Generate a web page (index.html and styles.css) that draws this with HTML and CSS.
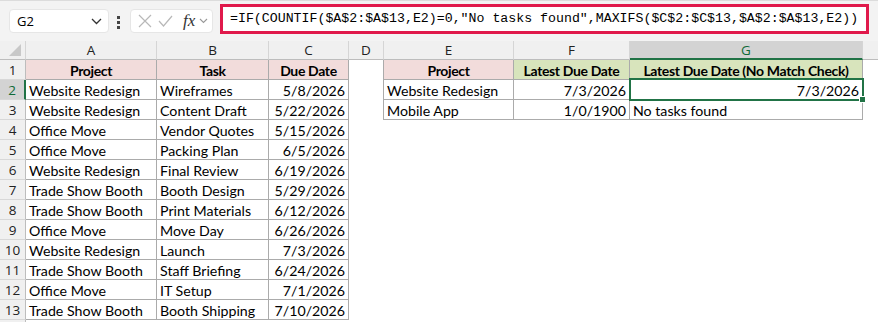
FILE: index.html
```html
<!DOCTYPE html>
<html lang="en">
<head>
  <meta charset="UTF-8">
  <title>Latest Due Date</title>
  <link rel="stylesheet" href="styles.css">
</head>
<body>

<!-- formula bar -->
<div class="toolbar">
  <div class="namebox">
    <span>G2</span>
    <svg width="11" height="7" viewBox="0 0 11 7"><path d="M1 1l4.5 4.5L10 1" fill="none" stroke="#333" stroke-width="1.3"/></svg>
  </div>
  <div class="dots"><i></i><i></i><i></i></div>
  <div class="fxbox">
    <svg width="14" height="14" viewBox="0 0 14 14"><path d="M1 1l12 12M13 1L1 13" stroke="#b8b8b8" stroke-width="1.2"/></svg>
    <svg width="15" height="12" viewBox="0 0 15 12"><path d="M1 6l4.5 5L14 1" fill="none" stroke="#b8b8b8" stroke-width="1.2"/></svg>
    <span class="fx">fx</span>
    <svg width="9" height="6" viewBox="0 0 9 6"><path d="M1 1l3.5 3.5L8 1" fill="none" stroke="#999" stroke-width="1.1"/></svg>
  </div>
  <div class="formula">=IF(COUNTIF($A$2:$A$13,E2)=0,"No tasks found",MAXIFS($C$2:$C$13,$A$2:$A$13,E2))</div>
</div>

<!-- sheet -->
<div class="sheet">
  <div class="ch corner"></div>
  <div class="ch">A</div><div class="ch">B</div><div class="ch">C</div><div class="ch">D</div>
  <div class="ch">E</div><div class="ch">F</div><div class="ch active">G</div><div class="ch rest"></div>

  <div class="rh">1</div>
  <div class="c t hd pink">Project</div><div class="c t hd pink">Task</div><div class="c t hd pink">Due Date</div>
  <div class="c edge"></div>
  <div class="c t hd pink">Project</div><div class="c t hd green">Latest Due Date</div><div class="c t hd green">Latest Due Date (No Match Check)</div><div class="c"></div>

  <div class="rh active">2</div>
  <div class="c t">Website Redesign</div><div class="c t">Wireframes</div><div class="c t num">5/8/2026</div>
  <div class="c edge"></div>
  <div class="c t">Website Redesign</div><div class="c t num">7/3/2026</div><div class="c t num sel">7/3/2026</div><div class="c"></div>

  <div class="rh">3</div>
  <div class="c t">Website Redesign</div><div class="c t">Content Draft</div><div class="c t num">5/22/2026</div>
  <div class="c edge"></div>
  <div class="c t">Mobile App</div><div class="c t num">1/0/1900</div><div class="c t">No tasks found</div><div class="c"></div>

  <div class="rh">4</div>
  <div class="c t">Office Move</div><div class="c t">Vendor Quotes</div><div class="c t num">5/15/2026</div>
  <div class="c"></div><div class="c"></div><div class="c"></div><div class="c"></div><div class="c"></div>

  <div class="rh">5</div>
  <div class="c t">Office Move</div><div class="c t">Packing Plan</div><div class="c t num">6/5/2026</div>
  <div class="c"></div><div class="c"></div><div class="c"></div><div class="c"></div><div class="c"></div>

  <div class="rh">6</div>
  <div class="c t">Website Redesign</div><div class="c t">Final Review</div><div class="c t num">6/19/2026</div>
  <div class="c"></div><div class="c"></div><div class="c"></div><div class="c"></div><div class="c"></div>

  <div class="rh">7</div>
  <div class="c t">Trade Show Booth</div><div class="c t">Booth Design</div><div class="c t num">5/29/2026</div>
  <div class="c"></div><div class="c"></div><div class="c"></div><div class="c"></div><div class="c"></div>

  <div class="rh">8</div>
  <div class="c t">Trade Show Booth</div><div class="c t">Print Materials</div><div class="c t num">6/12/2026</div>
  <div class="c"></div><div class="c"></div><div class="c"></div><div class="c"></div><div class="c"></div>

  <div class="rh">9</div>
  <div class="c t">Office Move</div><div class="c t">Move Day</div><div class="c t num">6/26/2026</div>
  <div class="c"></div><div class="c"></div><div class="c"></div><div class="c"></div><div class="c"></div>

  <div class="rh">10</div>
  <div class="c t">Website Redesign</div><div class="c t">Launch</div><div class="c t num">7/3/2026</div>
  <div class="c"></div><div class="c"></div><div class="c"></div><div class="c"></div><div class="c"></div>

  <div class="rh">11</div>
  <div class="c t">Trade Show Booth</div><div class="c t">Staff Briefing</div><div class="c t num">6/24/2026</div>
  <div class="c"></div><div class="c"></div><div class="c"></div><div class="c"></div><div class="c"></div>

  <div class="rh">12</div>
  <div class="c t">Office Move</div><div class="c t">IT Setup</div><div class="c t num">7/1/2026</div>
  <div class="c"></div><div class="c"></div><div class="c"></div><div class="c"></div><div class="c"></div>

  <div class="rh">13</div>
  <div class="c t">Trade Show Booth</div><div class="c t">Booth Shipping</div><div class="c t num">7/10/2026</div>
  <div class="c"></div><div class="c"></div><div class="c"></div><div class="c"></div><div class="c"></div>

  <div class="rh"></div>
</div>

</body>
</html>
```

FILE: styles.css
```css
body {
  margin: 0;
  background: #fff;
  overflow: hidden;
  font-family: Lato, 'Noto Sans', sans-serif;
  color: #000;
}

/* formula bar */
.toolbar {
  display: flex;
  align-items: flex-start;
  height: 41px;
  background: #f3f3f3;
  border-top: 1px solid #dcdcdc;
  box-sizing: border-box;
}
.namebox {
  display: flex;
  align-items: center;
  justify-content: space-between;
  margin: 8px 0 0 9px;
  width: 100px;
  height: 24px;
  padding: 0 6px 0 7px;
  box-sizing: border-box;
  background: #fff;
  border: 1px solid #e6e6e6;
  border-radius: 4px;
  font-family: 'Open Sans', sans-serif;
  font-size: 13px;
}
.dots {
  display: flex;
  flex-direction: column;
  gap: 2px;
  margin: 15px 0 0 8px;
}
.dots i {
  width: 3px;
  height: 3px;
  background: #444;
}
.fxbox {
  display: flex;
  align-items: center;
  gap: 6px;
  margin: 8px 0 0 10px;
  width: 83px;
  height: 24px;
  padding: 0 0 0 7px;
  box-sizing: border-box;
  background: #fff;
  border: 1px solid #e6e6e6;
  border-radius: 4px;
}
.fx {
  font-family: 'Liberation Serif', serif;
  font-style: italic;
  font-size: 17px;
  color: #333;
  margin-left: 4px;
  margin-right: -2px;
}
.formula {
  margin: 3px 0 0 7px;
  width: 649px;
  height: 30px;
  box-sizing: border-box;
  border: 3px solid #e0194b;
  background: #fff;
  padding: 0 0 0 7px;
  font-family: 'Liberation Mono', monospace;
  font-size: 13.25px;
  line-height: 24px;
  white-space: nowrap;
  overflow: hidden;
}

/* sheet */
.sheet {
  display: grid;
  grid-template-columns: 26px 131px 112px 80px 35px 130px 116px 233px 1fr;
  grid-template-rows: 19px repeat(14, 20px);
}
.ch {
  background: #f0f0f0;
  border-right: 1px solid #d5d5d5;
  border-bottom: 1px solid #bdbdbd;
  box-sizing: border-box;
  font-family: 'Open Sans', sans-serif;
  font-size: 13.5px;
  line-height: 19px;
  text-align: center;
  color: #222;
}
.ch.corner {
  position: relative;
}
.ch.corner::after {
  content: '';
  position: absolute;
  right: 4px;
  bottom: 3px;
  border-left: 12px solid transparent;
  border-bottom: 12px solid #c8c8c8;
}
.ch.active {
  background: #d3d3d3;
  color: #0f6a37;
  border-bottom: 2px solid #217346;
}
.ch.rest {
  border-right: none;
}
.rh {
  background: #f0f0f0;
  border-right: 1px solid #bdbdbd;
  border-bottom: 1px solid #d8d8d8;
  box-sizing: border-box;
  font-family: 'Open Sans', sans-serif;
  font-size: 13.5px;
  line-height: 20px;
  text-align: center;
  color: #222;
}
.rh.active {
  background: #d3d3d3;
  color: #0f6a37;
  border-right: 2px solid #217346;
}
.c {
  box-sizing: border-box;
  padding: 1px 3px 0;
  font-size: 14.2px;
  line-height: 19px;
  white-space: nowrap;
  overflow: hidden;
}
.t {
  border-right: 1px solid #ababab;
  border-bottom: 1px solid #ababab;
}
.edge {
  border-right: 1px solid #ababab;
}
.hd {
  font-weight: bold;
  font-size: 14px;
  letter-spacing: -0.35px;
  text-align: center;
}
.pink {
  background: #f2dcdb;
}
.green {
  background: #d8e4bc;
}
.num {
  text-align: right;
}
.sel {
  position: relative;
  overflow: visible;
}
.sel::before {
  content: '';
  position: absolute;
  left: -1px;
  top: -2px;
  right: -2px;
  bottom: -2px;
  border: 2px solid #217346;
}
.sel::after {
  content: '';
  position: absolute;
  right: -4px;
  bottom: -4px;
  width: 5px;
  height: 5px;
  background: #217346;
  border: 1px solid #fff;
}
```
